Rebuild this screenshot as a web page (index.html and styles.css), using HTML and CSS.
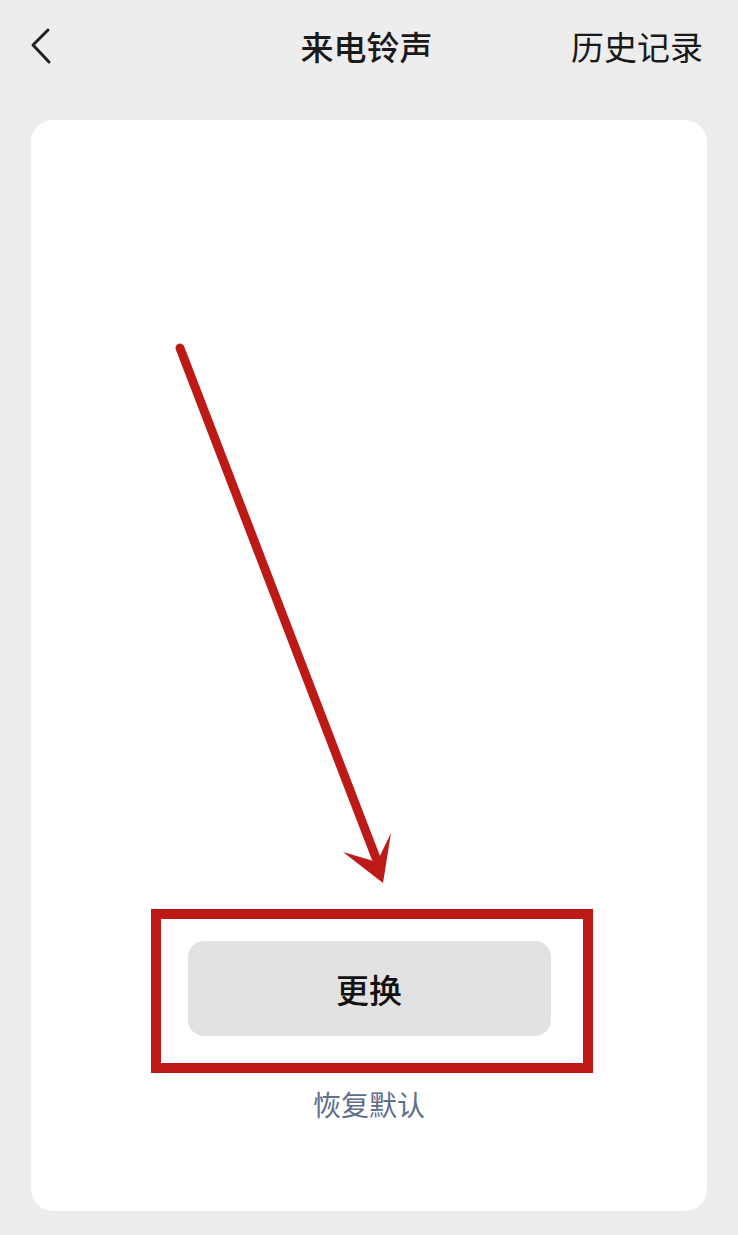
FILE: index.html
```html
<!DOCTYPE html>
<html lang="zh-CN">
<head>
<meta charset="utf-8">
<title>来电铃声</title>
<link rel="stylesheet" href="styles.css">
</head>
<body>
<header class="topbar">
  <div class="back">
    <svg width="24" height="40" viewBox="0 0 24 40"><path d="M18 9 L3 24 L19 41" transform="translate(0,-5)" fill="none" stroke="#222" stroke-width="3" stroke-linecap="round" stroke-linejoin="round"/></svg>
  </div>
  <h1 class="title">来电铃声</h1>
  <div class="history">历史记录</div>
</header>
<main class="card">
  <button class="change">更换</button>
  <a class="restore">恢复默认</a>
  <svg class="annot" width="676" height="1091" viewBox="0 0 676 1091">
    <line x1="149" y1="228" x2="345" y2="738" stroke="#bd1a17" stroke-width="9" stroke-linecap="round"/>
    <polygon points="352,763 312,732 346,742 360,713" fill="#bd1a17"/>
    <rect x="125" y="794" width="432" height="154" fill="none" stroke="#bd1a17" stroke-width="10"/>
  </svg>
</main>
</body>
</html>
```
FILE: styles.css
```css
html, body {
  margin: 0;
  padding: 0;
}
body {
  background: #ededed;
  font-family: "Noto Sans CJK SC", "Noto Sans", sans-serif;
  width: 738px;
  height: 1235px;
  overflow: hidden;
}
.topbar {
  height: 92px;
  display: grid;
  grid-template-columns: 1fr auto 1fr;
  align-items: center;
  padding: 0 35px 0 30px;
}
.back {
  display: flex;
  align-items: center;
}
.title {
  margin: 0;
  font-size: 33px;
  font-weight: 500;
  color: #1a1a1a;
  line-height: 40px;
}
.history {
  justify-self: end;
  font-size: 33px;
  color: #1a1a1a;
  line-height: 40px;
}
.card {
  position: relative;
  margin: 28px 31px 0;
  height: 1091px;
  background: #fff;
  border-radius: 22px;
  box-sizing: border-box;
  display: flex;
  flex-direction: column;
  align-items: center;
  justify-content: flex-end;
  padding-bottom: 87px;
}
.change {
  width: 363px;
  height: 95px;
  border: none;
  border-radius: 16px;
  background: #e2e2e2;
  font-family: inherit;
  font-size: 33px;
  font-weight: 500;
  color: #111;
  padding: 0;
}
.restore {
  margin-top: 48px;
  font-size: 28px;
  line-height: 40px;
  color: #5d6d8c;
}
.annot {
  position: absolute;
  left: 0;
  top: 0;
  pointer-events: none;
}
```
